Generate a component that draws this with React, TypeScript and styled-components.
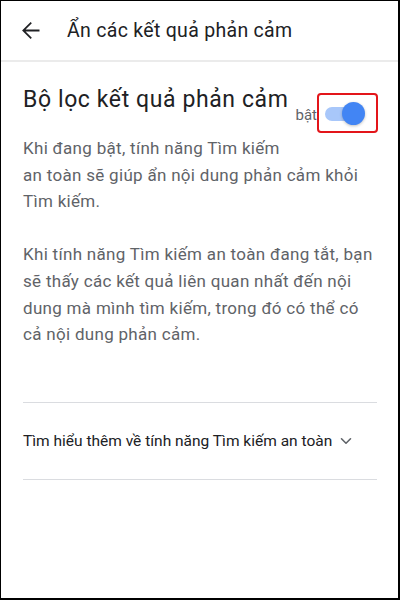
import React from "react"
import styled, { createGlobalStyle } from "styled-components"

const GlobalStyle = createGlobalStyle`
  html, body {
    margin: 0;
    padding: 0;
    background: #ffffff;
  }
  body {
    font-family: Roboto, "Noto Sans", "Liberation Sans", sans-serif;
  }
`

const Frame = styled.div`
  width: 400px;
  height: 600px;
  box-sizing: border-box;
  border-style: solid;
  border-color: #000000;
  border-width: 1px 2px 2px 1px;
  background: #ffffff;
  display: flex;
  flex-direction: column;
  overflow: hidden;
`

const Header = styled.div`
  height: 59px;
  flex-shrink: 0;
  display: flex;
  align-items: center;
  padding-left: 16px;
  border-bottom: 2px solid #ebebeb;
`

const BackButton = styled.button`
  border: 0;
  background: none;
  padding: 0;
  margin: 0 23px 0 0;
  width: 27px;
  height: 27px;
  display: flex;
  align-items: center;
  justify-content: center;
  color: #202124;
  cursor: pointer;
`

const HeaderTitle = styled.h1`
  margin: 0;
  font-size: 19.5px;
  letter-spacing: 0.3px;
  font-weight: 400;
  color: #202124;
  line-height: 24px;
  margin-top: 1px;
`

const Content = styled.div`
  padding: 0 20px 0 22px;
`

const TitleRow = styled.div`
  display: flex;
  align-items: flex-start;
  justify-content: space-between;
  padding-top: 24px;
`

const Title = styled.h2`
  margin: 0;
  font-size: 23px;
  letter-spacing: 0.6px;
  font-weight: 400;
  line-height: 28px;
  color: #202124;
  white-space: nowrap;
`

const SwitchGroup = styled.div`
  display: flex;
  align-items: center;
  margin-top: 7px;
`

const SwitchLabel = styled.span`
  font-size: 15px;
  line-height: 20px;
  color: #5f6368;
  margin-top: 4px;
`

const Highlight = styled.div`
  width: 61px;
  height: 40px;
  box-sizing: border-box;
  border: 2.5px solid #e3151a;
  border-radius: 4px;
  display: flex;
  align-items: center;
  padding-left: 6px;
`

const Track = styled.div<{ $on: boolean }>`
  position: relative;
  width: 36px;
  height: 14px;
  border-radius: 7px;
  background: ${p => (p.$on ? "#a8c7fa" : "#bdc1c6")};
  margin-top: 1px;
`

const Thumb = styled.div<{ $on: boolean }>`
  position: absolute;
  top: 50%;
  left: ${p => (p.$on ? "17px" : "-2px")};
  width: 23px;
  height: 23px;
  margin-top: -11.5px;
  border-radius: 50%;
  background: ${p => (p.$on ? "#4285f4" : "#f1f3f4")};
  box-shadow: 0 1px 3px rgba(0, 0, 0, 0.25);
`

const Paragraph = styled.p<{ $gap?: number }>`
  margin: ${p => p.$gap ?? 0}px 0 0;
  font-size: 17px;
  letter-spacing: 0.3px;
  line-height: 26.7px;
  color: #5f6368;
`

const Divider = styled.div<{ $gap?: number }>`
  height: 1px;
  background: #dadce0;
  margin-top: ${p => p.$gap ?? 0}px;
  margin-right: 1px;
`

const LinkRow = styled.div`
  height: 76px;
  display: flex;
  align-items: center;
  gap: 8px;
`

const LinkText = styled.span`
  font-size: 15.5px;
  color: #202124;
  margin-top: 1px;
`

const BackIcon = () => (
  <svg width="27" height="27" viewBox="0 0 24 24" fill="currentColor">
    <path d="M20 11.1H7.6l5.6-5.6L12.1 4.4 4.5 12l7.6 7.6 1.1-1.1-5.6-5.6H20z" />
  </svg>
)

const ChevronIcon = () => (
  <svg width="12" height="8" viewBox="0 0 12 8" fill="none">
    <polyline
      points="1.5,1.8 6,6.2 10.5,1.8"
      stroke="#5f6368"
      strokeWidth="1.6"
      strokeLinecap="round"
      strokeLinejoin="round"
    />
  </svg>
)

const App: React.FC = () => {
  const on = true

  return (
    <>
      <GlobalStyle />
      <Frame>
        <Header>
          <BackButton aria-label="Quay lại">
            <BackIcon />
          </BackButton>
          <HeaderTitle>Ẩn các kết quả phản cảm</HeaderTitle>
        </Header>
        <Content>
          <TitleRow>
            <Title>Bộ lọc kết quả phản cảm</Title>
            <SwitchGroup>
              <SwitchLabel>bật</SwitchLabel>
              <Highlight>
                <Track $on={on}>
                  <Thumb $on={on} />
                </Track>
              </Highlight>
            </SwitchGroup>
          </TitleRow>
          <Paragraph $gap={2}>
            Khi đang bật, tính năng Tìm kiếm
            <br />
            an toàn sẽ giúp ẩn nội dung phản cảm khỏi Tìm kiếm.
          </Paragraph>
          <Paragraph $gap={26}>
            Khi tính năng Tìm kiếm an toàn đang tắt, bạn sẽ thấy các kết quả
            liên quan nhất đến nội dung mà mình tìm kiếm, trong đó có thể có cả
            nội dung phản cảm.
          </Paragraph>
          <Divider $gap={54} />
          <LinkRow>
            <LinkText>Tìm hiểu thêm về tính năng Tìm kiếm an toàn</LinkText>
            <ChevronIcon />
          </LinkRow>
          <Divider />
        </Content>
      </Frame>
    </>
  )
}

export default App
